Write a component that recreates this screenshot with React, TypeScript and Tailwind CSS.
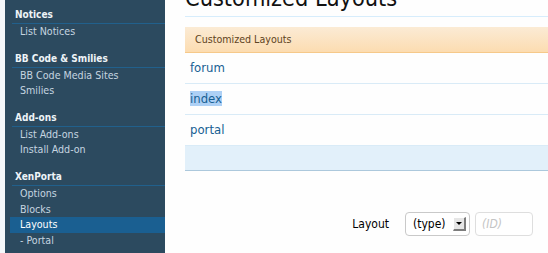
import React from "react";

const sections = [
  { title: "Notices", items: ["List Notices"] },
  { title: "BB Code & Smilies", items: ["BB Code Media Sites", "Smilies"] },
  { title: "Add-ons", items: ["List Add-ons", "Install Add-on"] },
  { title: "XenPorta", items: ["Options", "Blocks", "Layouts", "- Portal"] },
];

const layouts = ["forum", "index", "portal"];

function Sidebar() {
  return (
    <nav className="w-[160px] shrink-0 bg-[#2c4a5f] pt-[7px]">
      {sections.map((section) => (
        <div key={section.title} className="mb-[11px]">
          <h3 className="ml-[7px] pl-[3px] pb-[1px] border-b border-[#21608c] text-[10px] leading-[15px] font-bold text-[#eef4f8]">
            {section.title}
          </h3>
          <ul>
            {section.items.map((item) => (
              <li
                key={item}
                className={
                  item === "Layouts"
                    ? "ml-[5px] pl-[10px] text-[10.6px] leading-[15.6px] bg-[#1a5f91] text-white"
                    : "ml-[5px] pl-[10px] text-[10.6px] leading-[15.6px] text-[#c6d5e0]"
                }
              >
                {item}
              </li>
            ))}
          </ul>
        </div>
      ))}
    </nav>
  );
}

function DropButton() {
  return (
    <span className="flex items-center justify-center w-[13px] h-[14px] bg-[#e6e6e6] border-t border-l border-t-white border-l-white border-r-2 border-b-2 border-r-[#7c7c7c] border-b-[#7c7c7c]">
      <span className="w-0 h-0 border-l-[3px] border-r-[3px] border-t-[3px] border-l-transparent border-r-transparent border-t-black" />
    </span>
  );
}

export default function App() {
  return (
    <div className="flex w-full h-[253px] overflow-hidden bg-[#f5f8fb] pl-[5px] font-['DejaVu_Sans_Condensed','DejaVu_Sans',sans-serif]">
      <Sidebar />

      <main className="flex-1 bg-[#fefefe] pl-[20px]">
        <h1 className="-mt-[16px] pb-[5px] border-b border-[#d7edfc] text-[23.3px] leading-[27px] text-[#111] whitespace-nowrap">
          Customized Layouts
        </h1>

        <div className="mt-[10px]">
          <div className="h-[26px] pl-[10px] border-b border-[#f6c98a] bg-gradient-to-b from-[#fbebd5] to-[#fcdcb0] text-[10.6px] leading-[25px] text-[#5e4322]">
            Customized Layouts
          </div>
          {layouts.map((name) => (
            <div
              key={name}
              className="h-[31px] pl-[5px] border-b border-[#d9ebf7] text-[13px] leading-[30px] text-[#176093]"
            >
              {name === "index" ? <span className="bg-[#add0f5]">{name}</span> : name}
            </div>
          ))}
          <div className="h-[25px] border-b border-[#acc8dc] bg-[#e2f0fa]" />
        </div>

        <div className="mt-[41px] flex items-center justify-end pr-[15px]">
          <span className="text-[12px] text-black mr-[16px]">Layout</span>
          <div className="flex items-center justify-between w-[65px] h-[24px] pl-[7px] pr-[3px] rounded-[4px] border border-[#c9c9c9] bg-white">
            <span className="text-[12px] text-black">(type)</span>
            <DropButton />
          </div>
          <input
            placeholder="(ID)"
            className="ml-[5px] w-[58px] h-[24px] pl-[6px] rounded-[4px] border border-[#dedede] bg-white text-[12px] italic outline-none placeholder:text-[#c4c4c4]"
          />
        </div>
      </main>
    </div>
  );
}
